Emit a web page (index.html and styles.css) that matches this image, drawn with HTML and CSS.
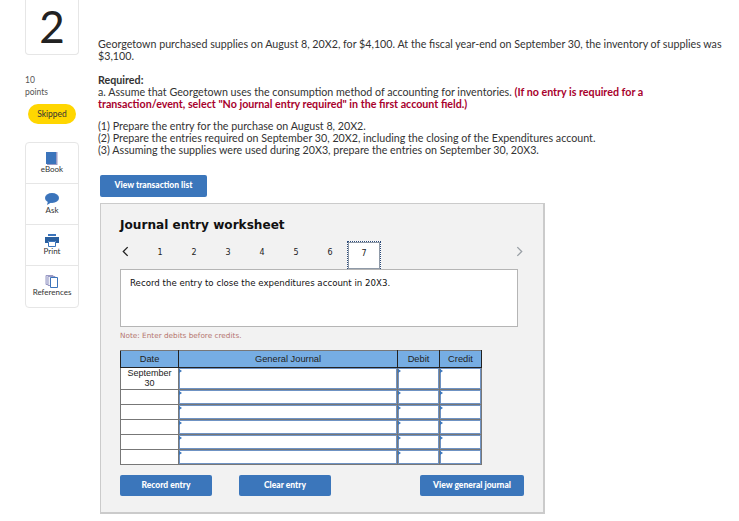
FILE: index.html
```html
<!DOCTYPE html>
<html lang="en">
<head>
    <meta charset="UTF-8">
    <meta name="viewport" content="width=device-width, initial-scale=1.0">
    <title>Question 2</title>
    <link rel="stylesheet" href="styles.css">
</head>
<body>

    <aside class="sidebar">
        <div class="question-number">2</div>
        <div class="points">10<br>points</div>
        <div class="status-pill">Skipped</div>
        <div class="tools">
            <div class="tool">
                <svg class="tool-icon" viewBox="0 0 14 14"><path d="M1 1h10v12H1z" fill="#3b74bb"/><path d="M11 1h1.5v13H2v-1h9z" fill="#9a9ac4"/></svg>
                <span>eBook</span>
            </div>
            <div class="tool">
                <svg class="tool-icon" viewBox="0 0 14 14"><ellipse cx="7" cy="6" rx="7" ry="5" fill="#3b74bb"/><path d="M3 9l-1 4 5-3z" fill="#3b74bb"/></svg>
                <span>Ask</span>
            </div>
            <div class="tool">
                <svg class="tool-icon" viewBox="0 0 14 14"><path d="M3 1h8v2H3z" fill="#3b74bb"/><path d="M0 4h14v6h-3V8H3v2H0z" fill="#2a5f9e"/><path d="M3.500 8.500h7v5h-7z" fill="#fff" stroke="#3b74bb"/></svg>
                <span>Print</span>
            </div>
            <div class="tool">
                <svg class="tool-icon" viewBox="0 0 14 14"><path d="M1 1.500h7v9H1z" fill="#dfe3f2" stroke="#9a9ac4"/><path d="M3 2.500h7v9H3z" fill="#eef0f8" stroke="#9a9ac4"/><path d="M5.500 3.500h7v10h-7z" fill="#fff" stroke="#3b74bb"/></svg>
                <span>References</span>
            </div>
        </div>
    </aside>

    <main class="content">
        <p class="problem">Georgetown purchased supplies on August 8, 20X2, for $4,100. At the fiscal year-end on September 30, the inventory of supplies was $3,100.</p>
        <p class="required">
            <strong>Required:</strong><br>
            a. Assume that Georgetown uses the consumption method of accounting for inventories. <strong class="warning">(If no entry is required for a transaction/event, select "No journal entry required" in the first account field.)</strong>
        </p>
        <p class="steps">
            (1) Prepare the entry for the purchase on August 8, 20X2.<br>
            (2) Prepare the entries required on September 30, 20X2, including the closing of the Expenditures account.<br>
            (3) Assuming the supplies were used during 20X3, prepare the entries on September 30, 20X3.
        </p>

        <a class="btn btn-list">View transaction list</a>

        <section class="worksheet">
            <h2>Journal entry worksheet</h2>

            <div class="tabs">
                <span class="arrow">
                    <svg viewBox="0 0 8 12"><path d="M6.500 1L1.500 6l5 5" fill="none" stroke="#222" stroke-width="1.500"/></svg>
                </span>
                <span class="tab">1</span>
                <span class="tab">2</span>
                <span class="tab">3</span>
                <span class="tab">4</span>
                <span class="tab">5</span>
                <span class="tab">6</span>
                <span class="tab tab-active">7</span>
                <span class="arrow arrow-next">
                    <svg viewBox="0 0 8 12"><path d="M1.500 1l5 5-5 5" fill="none" stroke="#9aa0a6" stroke-width="1.500"/></svg>
                </span>
            </div>

            <div class="prompt">Record the entry to close the expenditures account in 20X3.</div>
            <p class="note">Note: Enter debits before credits.</p>

            <table class="journal">
                <thead>
                    <tr>
                        <th class="col-date">Date</th>
                        <th class="col-account">General Journal</th>
                        <th class="col-amount">Debit</th>
                        <th class="col-amount">Credit</th>
                    </tr>
                </thead>
                <tbody>
                    <tr class="row-first">
                        <td class="date">September<br>30</td>
                        <td class="cell"></td><td class="cell"></td><td class="cell"></td>
                    </tr>
                    <tr><td class="date"></td><td class="cell"></td><td class="cell"></td><td class="cell"></td></tr>
                    <tr><td class="date"></td><td class="cell"></td><td class="cell"></td><td class="cell"></td></tr>
                    <tr><td class="date"></td><td class="cell"></td><td class="cell"></td><td class="cell"></td></tr>
                    <tr><td class="date"></td><td class="cell"></td><td class="cell"></td><td class="cell"></td></tr>
                    <tr><td class="date"></td><td class="cell"></td><td class="cell"></td><td class="cell"></td></tr>
                </tbody>
            </table>

            <div class="actions">
                <a class="btn btn-record">Record entry</a>
                <a class="btn btn-clear">Clear entry</a>
                <a class="btn btn-view">View general journal</a>
            </div>
        </section>
    </main>

</body>
</html>
```

FILE: styles.css
```css
html, body {
    height: 521px;
    overflow: hidden;
}
body {
    margin: 0;
    display: flex;
    background-color: white;
    font-family: Lato, sans-serif;
    color: #333;
}

/* Left column */
.sidebar {
    width: 54px;
    margin-left: 25px;
    flex-shrink: 0;
}
.question-number {
    height: 55px;
    box-sizing: border-box;
    border: 1px solid #e6e6e6;
    border-top: none;
    border-radius: 0 0 4px 4px;
    text-align: center;
    font-size: 44px;
    line-height: 53px;
    color: #222;
}
.points {
    margin-top: 19px;
    font-size: 8.5px;
    line-height: 12px;
    color: #555;
}
.status-pill {
    width: 48px;
    height: 20px;
    margin: 6px 0 0 3px;
    border-radius: 10px;
    background-color: #ffd600;
    text-align: center;
    font-size: 8.5px;
    line-height: 20px;
}
.tools {
    margin-top: 18px;
    border: 1px solid #e6e6e6;
    border-radius: 4px;
}
.tool {
    height: 41px;
    border-bottom: 1px solid #e6e6e6;
    display: flex;
    flex-direction: column;
    align-items: center;
    padding-top: 8px;
    box-sizing: border-box;
    font-size: 8px;
    line-height: 9px;
    color: #333;
}
.tool:last-child {
    border-bottom: none;
}
.tool-icon {
    width: 14px;
    height: 14px;
}

/* Question text */
.content {
    margin-left: 19px;
    width: 630px;
    padding-top: 38px;
    font-size: 10.7px;
    line-height: 12px;
}
.content p {
    margin: 0;
}
.required {
    margin-top: 12px !important;
}
.required strong {
    font-weight: 700;
}
.required .warning {
    color: #a8002c;
    font-weight: 700;
}
.steps {
    margin-top: 10px !important;
}

.btn {
    display: block;
    box-sizing: border-box;
    height: 22px;
    background-color: #3b76bb;
    border-radius: 2px;
    color: white;
    font-size: 8.5px;
    font-weight: 900;
    line-height: 20px;
    text-align: center;
}
.btn-list {
    width: 107px;
    margin: 19px 0 0 2px;
}

/* Worksheet panel */
.worksheet {
    width: 445px;
    height: 311px;
    box-sizing: border-box;
    margin: 6px 0 0 2px;
    padding: 0 19px;
    background-color: #f2f2f2;
    border: 2px solid #cbcbcb;
    border-width: 1px 2px 2px 1px;
}
.worksheet h2 {
    margin: 13px 0 0 0;
    font-family: "DejaVu Sans", sans-serif;
    font-size: 12.1px;
    line-height: 16px;
    font-weight: 700;
    color: #111;
}
.tabs {
    display: flex;
    height: 28px;
    margin-top: 8px;
    font-family: "DejaVu Sans", sans-serif;
    font-size: 8px;
    color: #222;
}
.arrow {
    width: 23px;
    padding: 5px 0 0 2px;
    box-sizing: border-box;
}
.arrow svg {
    display: block;
    width: 7px;
    height: 11px;
}
.arrow-next {
    margin-left: 133px;
    width: auto;
}
.tab {
    width: 34px;
    text-align: center;
    line-height: 24px;
    box-sizing: border-box;
}
.tab-active {
    background-color: white;
    border: 1px dotted #2c4a78;
    border-bottom: none;
    box-shadow: inset 0 0 0 1px #8f9aa8;
    position: relative;
    z-index: 1;
}
.prompt {
    width: 398px;
    height: 58px;
    box-sizing: border-box;
    padding: 7px 9px;
    background-color: white;
    border: 1px solid #b5b5b5;
    font-family: "DejaVu Sans", sans-serif;
    font-size: 8.65px;
    line-height: 13px;
    color: #111;
}
.content .note {
    margin-top: 4px;
    font-family: "DejaVu Sans", sans-serif;
    font-size: 7.3px;
    line-height: 10px;
    color: #b5766f;
}

/* Journal table */
.journal {
    margin-top: 9px;
    width: 362px;
    table-layout: fixed;
    border-collapse: collapse;
    font-family: "Liberation Sans", sans-serif;
    font-size: 9px;
    line-height: 10px;
    color: #222;
}
.journal th {
    height: 17px;
    padding: 0;
    box-sizing: border-box;
    background-color: #76ade3;
    border: 1px solid #222;
    border-top-color: #777;
    font-size: 9.3px;
    font-weight: 400;
}
.col-date {
    width: 58px;
}
.col-amount {
    width: 42px;
}
.journal td {
    height: 15px;
    padding: 0;
    box-sizing: border-box;
    background-color: white;
}
.row-first td {
    height: 22px;
}
.date {
    border: 1px solid #777;
    text-align: center;
    vertical-align: top;
}
.journal .cell {
    position: relative;
    border: 1px solid #777;
    box-shadow: inset 0 0 0 1px #6f93c4;
}
.cell::before {
    content: "";
    position: absolute;
    top: 1px;
    left: 0;
    border-top: 2px solid transparent;
    border-bottom: 2px solid transparent;
    border-left: 3px solid #3b76bb;
}

.actions {
    display: flex;
    margin-top: 10px;
}
.actions .btn {
    height: 21px;
}
.btn-record, .btn-clear {
    width: 92px;
}
.btn-clear {
    margin-left: 27px;
}
.btn-view {
    width: 104px;
    margin-left: 89px;
}
```
